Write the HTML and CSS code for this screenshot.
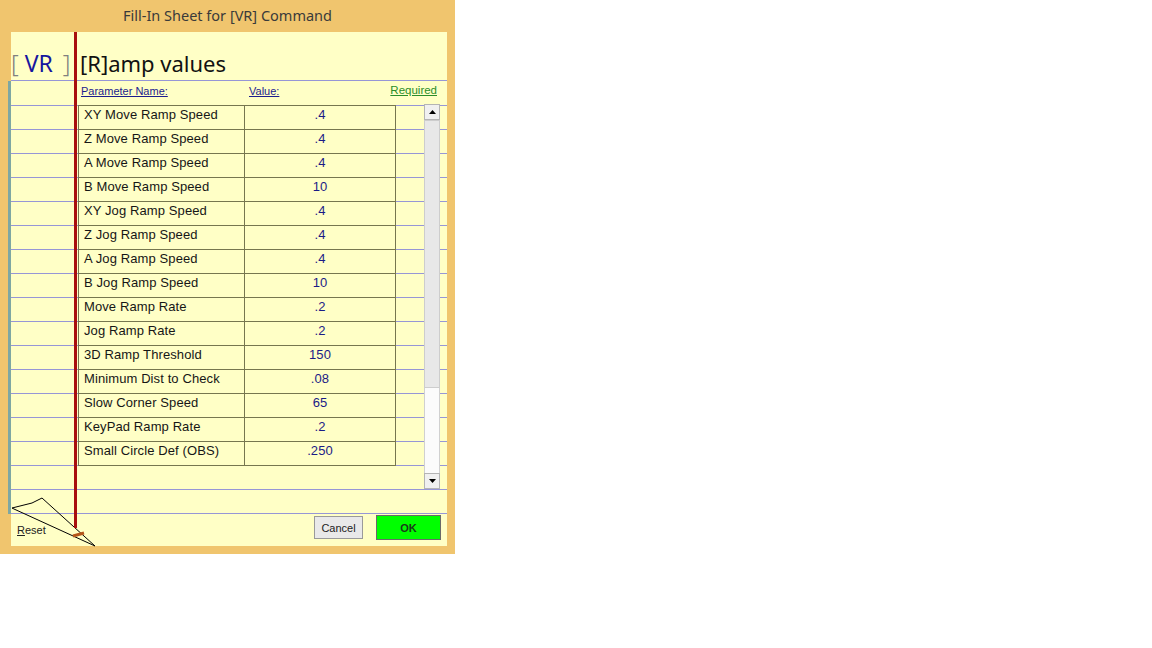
FILE: index.html
```html
<!DOCTYPE html>
<html lang="en">
<head>
  <meta charset="UTF-8" />
  <title>Fill-In Sheet for [VR] Command</title>
  <link rel="stylesheet" href="styles.css">
</head>
<body>
  <div class="window">
    <div class="titlebar">Fill-In Sheet for [VR] Command</div>
    <div class="client">
      <div class="head-row">
        <div class="cmd"><span class="br">[</span><span class="code">VR</span><span class="br br-end">]</span></div>
        <h1 class="sheet-title">[R]amp values</h1>
      </div>
      <div class="col-row">
        <a class="col-name">Parameter Name:</a>
        <a class="col-value">Value:</a>
        <a class="col-req">Required</a>
      </div>
      <div class="list">
        <div class="grid">
          <div class="trow"><div class="name">XY Move Ramp Speed</div><div class="value">.4</div></div>
          <div class="trow"><div class="name">Z Move Ramp Speed</div><div class="value">.4</div></div>
          <div class="trow"><div class="name">A Move Ramp Speed</div><div class="value">.4</div></div>
          <div class="trow"><div class="name">B Move Ramp Speed</div><div class="value">10</div></div>
          <div class="trow"><div class="name">XY Jog Ramp Speed</div><div class="value">.4</div></div>
          <div class="trow"><div class="name">Z Jog Ramp Speed</div><div class="value">.4</div></div>
          <div class="trow"><div class="name">A Jog Ramp Speed</div><div class="value">.4</div></div>
          <div class="trow"><div class="name">B Jog Ramp Speed</div><div class="value">10</div></div>
          <div class="trow"><div class="name">Move Ramp Rate</div><div class="value">.2</div></div>
          <div class="trow"><div class="name">Jog Ramp Rate</div><div class="value">.2</div></div>
          <div class="trow"><div class="name">3D Ramp Threshold</div><div class="value">150</div></div>
          <div class="trow"><div class="name">Minimum Dist to Check</div><div class="value">.08</div></div>
          <div class="trow"><div class="name">Slow Corner Speed</div><div class="value">65</div></div>
          <div class="trow"><div class="name">KeyPad Ramp Rate</div><div class="value">.2</div></div>
          <div class="trow"><div class="name">Small Circle Def (OBS)</div><div class="value">.250</div></div>
        </div>
        <div class="scrollbar">
          <div class="sb-btn">
            <svg width="7" height="4" viewBox="0 0 7 4"><polygon points="0,4 7,4 3.5,0" fill="#000"/></svg>
          </div>
          <div class="sb-thumb"></div>
          <div class="sb-track"></div>
          <div class="sb-btn">
            <svg width="7" height="4" viewBox="0 0 7 4"><polygon points="0,0 7,0 3.5,4" fill="#000"/></svg>
          </div>
        </div>
      </div>
      <div class="footer">
        <span class="reset"><u>R</u>eset</span>
        <button class="btn cancel">Cancel</button>
        <button class="btn ok">OK</button>
      </div>
      <svg class="plane" width="90" height="52" viewBox="0 0 90 52">
        <polyline points="2,13 22,8 32,3 85,51 4,14 2,13" fill="none" stroke="#000" stroke-width="1"/>
        <line x1="63" y1="41" x2="74" y2="38" stroke="#b5561a" stroke-width="3"/>
      </svg>
    </div>
  </div>
</body>
</html>
```

FILE: styles.css
```css
body {
  margin: 0;
  background: #fff;
  font-family: "Liberation Sans", Arial, sans-serif;
}
.window {
  width: 455px;
  height: 554px;
  background: #f0c56e;
  box-sizing: border-box;
}
.titlebar {
  height: 32px;
  line-height: 31px;
  text-align: center;
  font-family: "Noto Sans", "Open Sans", sans-serif;
  font-size: 14.5px;
  color: #3a3a3a;
}
.client {
  position: relative;
  margin: 0 8px 0 11px;
  height: 514px;
  background: #ffffc6;
  display: flex;
  flex-direction: column;
}
/* red margin line of the sheet */
.client::after {
  content: "";
  position: absolute;
  left: 63px;
  top: 0;
  width: 3px;
  height: 496px;
  background: #a80f0f;
}
.head-row {
  border-bottom: 1px solid #9696d6;
  display: flex;
  align-items: flex-end;
  padding-bottom: 4px;
  height: 44px;
  font-family: "Noto Sans", "Open Sans", sans-serif;
}
.cmd {
  width: 66px;
  line-height: 26px;
  font-size: 22px;
}
.cmd .br {
  color: #808080;
  font-size: 24px;
  font-weight: 300;
}
.cmd .code {
  color: #16169e;
  font-size: 23px;
  margin-left: 6px;
  margin-right: 10px;
}
.sheet-title {
  margin: 0;
  padding-left: 3px;
  font-size: 22px;
  font-weight: normal;
  line-height: 26px;
  color: #111;
}
.col-row {
  height: 24px;
  box-sizing: border-box;
  padding: 4px 10px 0 70px;
  display: flex;
  font-size: 11px;
  line-height: 12px;
  box-shadow: -3px 0 0 #7ea7a2;
}
.col-row a {
  text-decoration: underline;
  color: #1c1c8e;
}
.col-name {
  width: 168px;
}
.col-req {
  margin-left: auto;
  color: #2a8d2a !important;
  font-size: 11.5px;
  margin-top: -1px;
}
.list {
  height: 409px;
  display: flex;
  align-items: flex-start;
  padding-left: 67px;
  background: repeating-linear-gradient(to bottom, #9696d6 0, #9696d6 1px, transparent 1px, transparent 24px);
  box-shadow: -3px 0 0 #7ea7a2;
}
.grid {
  border-top: 1px solid #76764f;
  border-left: 1px solid #76764f;
}
.trow {
  display: flex;
  height: 24px;
  box-sizing: border-box;
  border-bottom: 1px solid #76764f;
  font-size: 13px;
  letter-spacing: 0.1px;
}
.name {
  width: 166px;
  box-sizing: border-box;
  border-right: 1px solid #76764f;
  padding: 0 0 6px 5px;
  display: flex;
  align-items: center;
  color: #161616;
}
.value {
  width: 151px;
  box-sizing: border-box;
  border-right: 1px solid #76764f;
  padding-bottom: 6px;
  display: flex;
  align-items: center;
  justify-content: center;
  color: #1b1b86;
}
.scrollbar {
  margin: -1px 7px 0 auto;
  width: 16px;
  height: 385px;
  display: flex;
  flex-direction: column;
}
.sb-btn {
  height: 16px;
  box-sizing: border-box;
  border: 1px solid #b4b4b4;
  background: #f0f0f0;
  display: flex;
  align-items: center;
  justify-content: center;
}
.sb-thumb {
  height: 268px;
  box-sizing: border-box;
  border: 1px solid #cdcdcd;
  background: #e8e8e8;
}
.sb-track {
  flex: 1;
  background: #fbfbfb;
  border-left: 1px solid #d0d0d0;
  border-right: 1px solid #d0d0d0;
}
.footer {
  flex: 1;
  display: flex;
  align-items: flex-start;
  padding: 1px 6px 0 6px;
}
.reset {
  margin-top: 9px;
  font-size: 11px;
  line-height: 13px;
  color: #222;
}
.btn {
  font-family: "Liberation Sans", Arial, sans-serif;
  font-size: 11px;
  padding: 0;
  cursor: pointer;
}
.cancel {
  margin: 1px 0 0 auto;
  width: 49px;
  height: 23px;
  border: 1px solid #9a9a9a;
  background: #e9e9e9;
  color: #222;
}
.ok {
  margin-left: 13px;
  width: 65px;
  height: 25px;
  border: 1px solid #6a6a6a;
  background: #00ff00;
  color: #1a3a1a;
  font-weight: bold;
}
.plane {
  position: absolute;
  left: -1px;
  top: 463px;
}
```
